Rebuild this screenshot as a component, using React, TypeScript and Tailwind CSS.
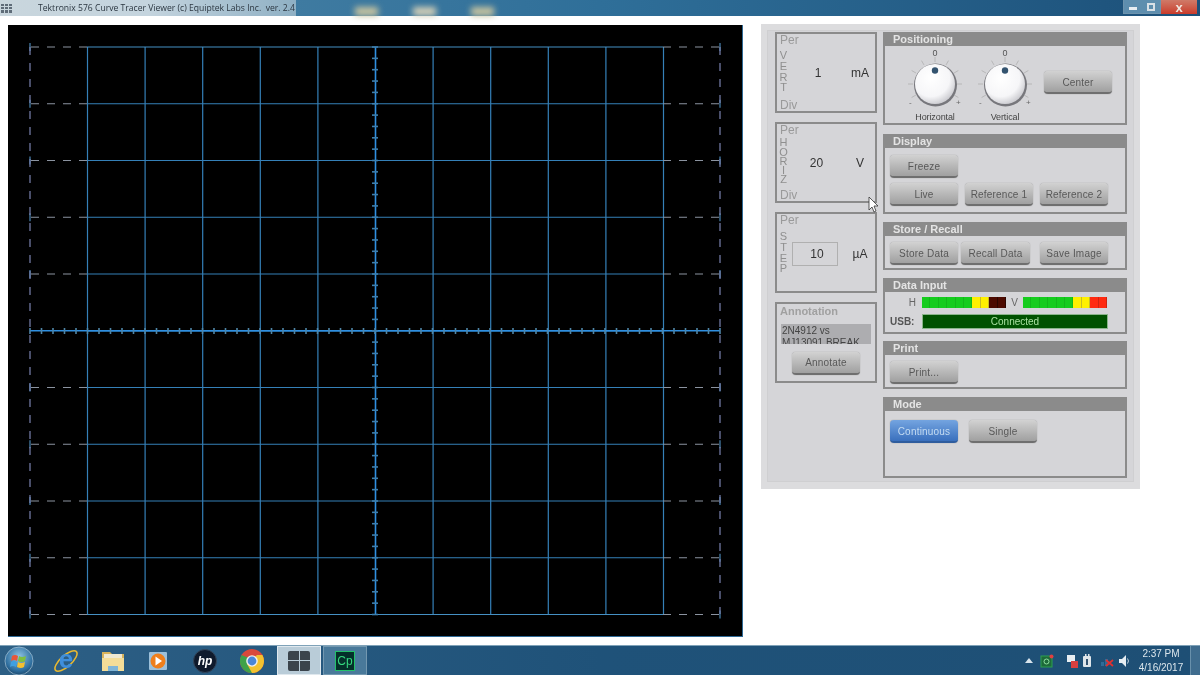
import React from "react";

const xs = Array.from({ length: 11 }, (_, i) => 87.5 + i * 57.6);
const ys = Array.from({ length: 11 }, (_, i) => 47 + i * 56.75);

function Graticule() {
  const hTicks = Array.from({ length: 61 }, (_, i) => 30 + i * 11.5);
  const vTicks = Array.from({ length: 51 }, (_, i) => 47 + i * 11.35);
  return (
    <svg width="734" height="611" viewBox="8 25 734 611" className="block">
      {xs.map((x, i) => (
        <line key={i} x1={x} x2={x} y1={47} y2={614} stroke={i === 5 ? "#2f8fe0" : "#3580b8"} strokeWidth={i === 5 ? 1.6 : 1.2} />
      ))}
      {ys.map((y, i) => (
        <g key={i}>
          <line x1={87} x2={663} y1={y} y2={y} stroke={i === 5 ? "#2f8fe0" : i === 0 || i === 10 ? "#4590c4" : "#3580b8"} strokeWidth={i === 5 ? 1.6 : 1.2} />
          {i === 5 ? (
            <line x1={30} x2={720} y1={y} y2={y} stroke="#2f8fe0" strokeWidth={1.6} />
          ) : (
            <>
              <line x1={87} x2={30} y1={y} y2={y} stroke="#8b93a0" strokeDasharray="8 8" strokeWidth={1.2} />
              <line x1={663} x2={720} y1={y} y2={y} stroke="#8b93a0" strokeDasharray="8 8" strokeWidth={1.2} />
              <line x1={30} x2={30} y1={y - 4} y2={y + 4} stroke="#4a87b5" strokeWidth={1.2} />
              <line x1={720} x2={720} y1={y - 4} y2={y + 4} stroke="#4a87b5" strokeWidth={1.2} />
            </>
          )}
        </g>
      ))}
      <line x1={30} x2={30} y1={47} y2={614} stroke="#7a82b0" strokeDasharray="8 8" strokeWidth={1.2} />
      <line x1={720} x2={720} y1={47} y2={614} stroke="#7a82b0" strokeDasharray="8 8" strokeWidth={1.2} />
      {hTicks.map((x, i) => (
        <line key={i} x1={x} x2={x} y1={328} y2={334} stroke="#4f86a8" strokeWidth={1.6} />
      ))}
      {vTicks.map((y, i) => (
        <line key={i} x1={372} x2={378} y1={y} y2={y} stroke="#3d7fae" strokeWidth={1.6} />
      ))}
    </svg>
  );
}

function Btn({ children, w = "w-[68px]", blue }: { children: React.ReactNode; w?: string; blue?: boolean }) {
  return (
    <div
      className={
        "h-[23px] pt-[1px] shrink-0 rounded-[4px] flex items-center justify-center text-[10px] tracking-[0.2px] border-b-2 shadow-[0_0_1px_#777] " +
        w +
        (blue
          ? " bg-gradient-to-b from-[#74a4e0] to-[#3a70bd] border-[#2f5d9e] text-[#c5dcf2]"
          : " bg-gradient-to-b from-[#d2d2d2] to-[#a0a0a0] border-[#6f6f6f] text-[#585858]")
      }
    >
      {children}
    </div>
  );
}

function Group({ title, h, children }: { title: string; h: string; children?: React.ReactNode }) {
  return (
    <div className={"border-2 border-t-0 border-[#8b8b8b] flex flex-col " + h}>
      <div className="h-[14px] shrink-0 bg-[#8b8b8b] text-[#e4e4e4] text-[11px] font-bold pl-[8px] leading-[14px]">{title}</div>
      {children}
    </div>
  );
}

function Stacked({ text, leading }: { text: string; leading: string }) {
  return (
    <div className={"flex flex-col w-[7px] shrink-0 text-[#8f8f8f] text-[11px] items-center -mt-[2px] " + leading}>
      {text.split("").map((c, i) => (
        <span key={i}>{c}</span>
      ))}
    </div>
  );
}

function ScaleBox({ letters, value, unit, boxed, leading, valueCls = "" }: { letters: string; value: string; unit: string; boxed?: boolean; leading: string; valueCls?: string }) {
  return (
    <div className="h-[81px] border-2 border-[#8b8b8b] flex flex-col pl-[3px] text-[#9a9a9a] text-[12px] leading-[12px]">
      <div>Per</div>
      <div className={"flex-1 flex items-center " + (boxed ? "pt-[3px]" : "")}>
        <Stacked text={letters} leading={leading} />
        {boxed ? (
          <div className="ml-[5px] w-[46px] h-[24px] pl-[4px] border border-[#b0b0b0] flex items-center justify-center text-[#333] text-[12px]">{value}</div>
        ) : (
          <div className={"w-[58px] text-center text-[#333] text-[12px] " + valueCls}>{value}</div>
        )}
        <div className="ml-auto w-[30px] text-center text-[#333] text-[12px]">{unit}</div>
      </div>
      {boxed ? <div className="h-[13px]" /> : <div className="mb-0">Div</div>}
    </div>
  );
}

function Knob({ label }: { label: string }) {
  const ticks = [-120, -90, -60, -30, 0, 30, 60, 90, 120];
  const id = "k" + label;
  return (
    <div className="w-[70px] flex flex-col items-center text-[#444] text-[9px] leading-[10px]">
      <div className="text-[#555]">0</div>
      <svg width="64" height="50" viewBox="-32 -27 64 50" className="-mt-[1px]">
        <defs>
          <radialGradient id={id} cx="40%" cy="35%" r="75%">
            <stop offset="0%" stopColor="#ffffff" />
            <stop offset="62%" stopColor="#f6f6f8" />
            <stop offset="100%" stopColor="#bcbcc2" />
          </radialGradient>
        </defs>
        {ticks.map((t) => {
          const a = (t * Math.PI) / 180;
          return (
            <line key={t} x1={Math.sin(a) * 22} y1={-Math.cos(a) * 22} x2={Math.sin(a) * 27} y2={-Math.cos(a) * 27} stroke="#b0b0b0" strokeWidth="0.8" />
          );
        })}
        <circle cx="0.5" cy="1" r="21.5" fill="#77777c" />
        <circle cx="0" cy="0" r="20" fill={"url(#" + id + ")"} />
        <circle cx="0" cy="-13.5" r="3.2" fill="#33536f" />
        <text x="-26" y="21" fontSize="8" fill="#666">-</text>
        <text x="21" y="21" fontSize="8" fill="#666">+</text>
      </svg>
      <div className="mt-[5px] tracking-[-0.1px]">{label}</div>
    </div>
  );
}

function Meter({ hot }: { hot: string }) {
  const segs = ["g", "g", "g", "g", "g", "g", "y", "y", "r", "r"];
  return (
    <div className="flex w-[84px] h-[11px]">
      {segs.map((s, i) => (
        <div
          key={i}
          className={
            "flex-1 border-r " +
            (s === "g" ? "bg-[#16cc1e] border-[#12b81a]" : s === "y" ? "bg-[#fff000] border-[#c8bd20]" : hot)
          }
        />
      ))}
    </div>
  );
}

function ControlPanel() {
  return (
    <div className="w-[379px] h-[465px] bg-[#dcdcde] p-[6px] shrink-0">
      <div className="h-[452px] border border-[#cfcfd1] bg-[#d5d5d8] flex pl-[7px] pr-[6px] pt-[1px] gap-[6px] text-[#333]">
        {/* left column */}
        <div className="w-[102px] flex flex-col gap-[9px]">
          <ScaleBox letters="VERT" value="1" unit="mA" leading="leading-[10.6px]" valueCls="pl-[4px]" />
          <ScaleBox letters="HORIZ" value="20" unit="V" leading="leading-[9.3px]" valueCls="pl-[1px]" />
          <ScaleBox letters="STEP" value="10" unit="µA" boxed leading="leading-[10.6px]" />
          <div className="h-[81px] border-2 border-[#8b8b8b] flex flex-col pl-[3px] text-[11px] leading-[12px]">
            <div className="mt-[1px] font-bold text-[#a0a0a0]">Annotation</div>
            <div className="mt-[7px] ml-[1px] w-[90px] h-[20px] bg-[#adadb0] overflow-hidden text-[#444] text-[10px] leading-[12px] pl-[1px] pt-[1px] whitespace-nowrap">
              <div>2N4912 vs</div>
              <div>MJ13091 BREAK</div>
            </div>
            <div className="mt-[8px] ml-[12px]">
              <Btn>Annotate</Btn>
            </div>
          </div>
        </div>
        {/* right column */}
        <div className="w-[244px] flex flex-col">
          <Group title="Positioning" h="h-[93px]">
            <div className="flex items-start pl-[15px] pt-[2px]">
              <Knob label="Horizontal" />
              <Knob label="Vertical" />
              <div className="ml-[4px] mt-[23px]">
                <Btn>Center</Btn>
              </div>
            </div>
          </Group>
          <div className="mt-[9px]">
            <Group title="Display" h="h-[80px]">
              <div className="pl-[5px] pt-[7px] flex flex-col gap-[5px]">
                <Btn>Freeze</Btn>
                <div className="flex gap-[7px]">
                  <Btn>Live</Btn>
                  <Btn>Reference 1</Btn>
                  <Btn>Reference 2</Btn>
                </div>
              </div>
            </Group>
          </div>
          <div className="mt-[8px]">
            <Group title="Store / Recall" h="h-[48px]">
              <div className="pl-[5px] pt-[6px] flex">
                <Btn>Store Data</Btn>
                <div className="ml-[3px]">
                  <Btn w="w-[69px]">Recall Data</Btn>
                </div>
                <div className="ml-[10px]">
                  <Btn>Save Image</Btn>
                </div>
              </div>
            </Group>
          </div>
          <div className="mt-[8px]">
            <Group title="Data Input" h="h-[56px]">
              <div className="flex items-center h-[11px] mt-[5px] text-[10px] text-[#666]">
                <div className="w-[34px] text-right mr-[3px] pr-[3px]">H</div>
                <Meter hot="bg-[#4c0a00] border-[#2c0600]" />
                <div className="w-[17px] text-center">V</div>
                <Meter hot="bg-[#ff2a10] border-[#d02410]" />
              </div>
              <div className="flex items-center mt-[6px]">
                <div className="w-[37px] pl-[5px] text-[10px] font-bold text-[#555]">USB:</div>
                <div className="w-[186px] h-[15px] bg-[#005200] border border-[#8bb58b] text-[#a8e0a0] text-[10px] leading-[13px] text-center">Connected</div>
              </div>
            </Group>
          </div>
          <div className="mt-[7px]">
            <Group title="Print" h="h-[48px]">
              <div className="pl-[5px] pt-[6px]">
                <Btn>Print...</Btn>
              </div>
            </Group>
          </div>
          <div className="mt-[8px]">
            <Group title="Mode" h="h-[81px]">
              <div className="pl-[5px] pt-[9px] flex gap-[11px]">
                <Btn blue>Continuous</Btn>
                <Btn>Single</Btn>
              </div>
            </Group>
          </div>
        </div>
      </div>
    </div>
  );
}

function Orb() {
  return (
    <svg width="30" height="30" viewBox="0 0 30 30">
      <defs>
        <radialGradient id="orb" cx="50%" cy="35%" r="70%">
          <stop offset="0%" stopColor="#8fc4e4" />
          <stop offset="70%" stopColor="#2f6f9f" />
          <stop offset="100%" stopColor="#173f60" />
        </radialGradient>
      </defs>
      <circle cx="15" cy="15" r="14" fill="url(#orb)" stroke="#a9c6d8" strokeWidth="0.7" />
      <path d="M8 10 q3 -2 6 0 l-1 5 q-3 -2 -6 0z" fill="#e8563a" />
      <path d="M15 10 q3 2 7 0 l-1 5 q-3 2 -7 0z" fill="#7fbf3f" />
      <path d="M7 16 q3 -2 6 0 l-1 5 q-3 -2 -6 0z" fill="#3f9fe0" />
      <path d="M14 16 q3 2 7 0 l-1 5 q-3 2 -7 0z" fill="#f5c02f" />
    </svg>
  );
}
function IE() {
  return (
    <svg width="28" height="28" viewBox="0 0 28 28">
      <ellipse cx="14" cy="14" rx="14" ry="5.5" transform="rotate(-42 14 14)" fill="none" stroke="#e8b830" strokeWidth="1.6" />
      <text x="14" y="21" textAnchor="middle" fontSize="26" fontWeight="700" fontFamily="'Liberation Sans',sans-serif" fill="#3f8fdc">e</text>
    </svg>
  );
}
function Folder() {
  return (
    <svg width="24" height="24" viewBox="0 0 24 24">
      <path d="M1 3h8l2 2h12v17H1z" fill="#d8b35c" />
      <rect x="3" y="5" width="18" height="7" fill="#efe9d2" />
      <rect x="1" y="9" width="22" height="13" fill="#f4dd98" />
      <rect x="7" y="17" width="10" height="5" fill="#7fb5d8" />
    </svg>
  );
}
function Player() {
  return (
    <svg width="20" height="20" viewBox="0 0 20 20">
      <rect x="1" y="1" width="18" height="18" rx="1" fill="#9cc0da" />
      <circle cx="10" cy="10" r="7.5" fill="#ee7f1c" />
      <path d="M7.5 5.5 14 10l-6.500 4.500z" fill="#fff" />
    </svg>
  );
}
function Hp() {
  return (
    <div className="w-[24px] h-[24px] rounded-full bg-[#0f1a2c] border border-[#33465c] flex items-center justify-center text-white text-[12px] font-bold italic leading-none">
      hp
    </div>
  );
}
function Chrome() {
  return (
    <svg width="24" height="24" viewBox="-12 -12 24 24">
      <circle r="12" fill="#d9493b" />
      <path d="M-10.4 -6 A12 12 0 0 0 0 12 L6 1z" fill="#3fa14a" />
      <path d="M12 0 A12 12 0 0 1 0 12 L-5 3 L5 -6 L10.400 -6 A12 12 0 0 1 12 0z" fill="#f2c230" />
      <circle r="5.800" fill="#f0f0f0" />
      <circle r="4.400" fill="#4a86d8" />
    </svg>
  );
}

function Tray() {
  return (
    <div className="ml-auto flex items-center h-full">
      <svg width="8" height="5" viewBox="0 0 8 5" className="mr-[7px]">
        <path d="M0 5 4 0l4 5z" fill="#d8e4ec" />
      </svg>
      <svg width="14" height="14" viewBox="0 0 14 14" className="mr-[11px]">
        <rect x="1" y="2" width="11" height="11" fill="#1d6a3a" stroke="#2da050" />
        <circle cx="6.500" cy="7.500" r="2.500" fill="none" stroke="#8fe0a0" />
        <circle cx="11.500" cy="2.500" r="2" fill="#e04040" />
      </svg>
      <svg width="14" height="14" viewBox="0 0 14 14" className="mr-[2px]">
        <path d="M2 1h8v7H2z" fill="#e8eef2" />
        <rect x="6" y="7" width="7" height="7" fill="#d84040" />
      </svg>
      <svg width="12" height="14" viewBox="0 0 12 14" className="mr-[8px]">
        <rect x="2" y="2" width="8" height="11" rx="1" fill="#dfe6ea" />
        <rect x="4" y="0" width="1.500" height="4" fill="#dfe6ea" />
        <rect x="7" y="0" width="1.500" height="4" fill="#dfe6ea" />
        <rect x="5" y="5" width="2" height="6" fill="#33536f" />
      </svg>
      <svg width="14" height="12" viewBox="0 0 14 12" className="mr-[4px]">
        <rect x="0" y="7" width="3" height="4" fill="#2e6c98" />
        <rect x="4" y="4" width="3" height="7" fill="#2e6c98" />
        <path d="M5 5 12 11M12 5 5 11" stroke="#e03030" strokeWidth="1.800" />
      </svg>
      <svg width="11" height="12" viewBox="0 0 11 12" className="mr-[2px]">
        <path d="M0 4h3l4-4v12L3 8H0z" fill="#e6edf2" />
        <path d="M8.500 3.500q2 2.500 0 5" fill="none" stroke="#c0d0dc" />
      </svg>
      <div className="w-[58px] pt-[1px] text-center text-[10px] leading-[14px] text-[#dbe6ec]">
        <div>2:37 PM</div>
        <div>4/16/2017</div>
      </div>
      <div className="w-[10px] h-full bg-[#5f8aa7]/50 border-l border-[#86a8be]/60" />
    </div>
  );
}

function TaskSlot({ w, children }: { w: string; children: React.ReactNode }) {
  return <div className={"flex items-center justify-center h-full " + w}>{children}</div>;
}

export default function App() {
  return (
    <div className="w-[1200px] h-[675px] overflow-hidden flex flex-col bg-white blur-[0.4px] font-['Liberation_Sans',Arial,sans-serif] relative">
      {/* title bar */}
      <div className="h-[16px] shrink-0 flex bg-gradient-to-r from-[#4d86a8] via-[#2f6f99] to-[#1c5079] relative">
        <div className="w-[296px] shrink-0 h-full flex items-center bg-gradient-to-r from-[#c9d6dd] via-[#c4d4de] to-[#8fb0c4]">
          <div className="w-[11px] h-[9px] shrink-0 ml-[1px] grid grid-cols-3 gap-px">
            {Array.from({ length: 9 }, (_, i) => (
              <div key={i} className="bg-[#5f6c78]" />
            ))}
          </div>
          <div className="ml-[26px] text-[8.6px] whitespace-pre text-[#2b3640] font-['Open_Sans',sans-serif]">
            Tektronix 576 Curve Tracer Viewer (c) Equiptek Labs Inc.  ver. 2.4
          </div>
        </div>
        <div className="flex ml-[59px] gap-[35px] items-end">
          <div className="w-[23px] h-[9px] bg-[#c8c4a0] blur-[3px]" />
          <div className="w-[23px] h-[9px] bg-[#d4d0b8] blur-[3px]" />
          <div className="w-[23px] h-[9px] bg-[#c8c4a0] blur-[3px]" />
        </div>
        <div className="ml-auto mr-[3px] flex h-[14px] text-[#eef2f5]">
          <div className="w-[19px] border-b border-l border-[#6d93ad] bg-[#5e8eae] flex items-center justify-center">
            <div className="w-[8px] h-[3px] bg-[#e8eef2] mt-[4px]" />
          </div>
          <div className="w-[19px] border-b border-r border-[#6d93ad] bg-[#5e8eae] flex items-center justify-center">
            <div className="w-[8px] h-[8px] border-2 border-[#d8e0e6]" />
          </div>
          <div className="w-[36px] bg-gradient-to-b from-[#cf7a68] to-[#c9392a] flex items-center justify-center text-[13px] font-bold text-[#f0e8e0] leading-none">
            x
          </div>
        </div>
      </div>

      {/* body */}
      <div className="flex-1 flex items-start pl-[8px] pt-[9px] bg-white min-h-0">
        <div className="w-[735px] h-[612px] bg-black border-r border-b border-[#2f6a96] shrink-0">
          <Graticule />
        </div>
        <div className="ml-[18px] -mt-[1px]">
          <ControlPanel />
        </div>
      </div>

      {/* taskbar */}
      <div className="h-[30px] shrink-0 flex items-center bg-gradient-to-r from-[#2d5f85] via-[#1f5279] to-[#1e4f75] border-t border-[#7fa2b8]">
        <TaskSlot w="w-[38px]"><Orb /></TaskSlot>
        <TaskSlot w="w-[56px]"><IE /></TaskSlot>
        <TaskSlot w="w-[38px]"><Folder /></TaskSlot>
        <TaskSlot w="w-[52px]"><Player /></TaskSlot>
        <TaskSlot w="w-[42px]"><Hp /></TaskSlot>
        <TaskSlot w="w-[51px]"><Chrome /></TaskSlot>
        <div className="w-[44px] h-full bg-[#b9ccd8] border border-[#dfe8ee] flex items-center justify-center">
          <div className="w-[22px] h-[20px] grid grid-cols-2 gap-[1px]">
            <div className="bg-[#3b444c] rounded-tl-[2px]" />
            <div className="bg-[#3b444c] rounded-tr-[2px]" />
            <div className="bg-[#3b444c] rounded-bl-[2px]" />
            <div className="bg-[#3b444c] rounded-br-[2px]" />
          </div>
        </div>
        <div className="w-[44px] h-full ml-[2px] bg-[#49799a] border border-[#7398b0] flex items-center justify-center">
          <div className="w-[20px] h-[20px] bg-[#04302a] border border-[#22c26a] text-[#35d97f] text-[12px] leading-[18px] text-center">Cp</div>
        </div>
        <Tray />
      </div>

      {/* mouse cursor */}
      <svg width="12" height="18" viewBox="0 0 12 18" className="absolute left-[868px] top-[196px]">
        <path d="M1 1v13l3-3 2 5 2-1-2-5h4z" fill="#fff" stroke="#333" strokeWidth="0.8" />
      </svg>
    </div>
  );
}
